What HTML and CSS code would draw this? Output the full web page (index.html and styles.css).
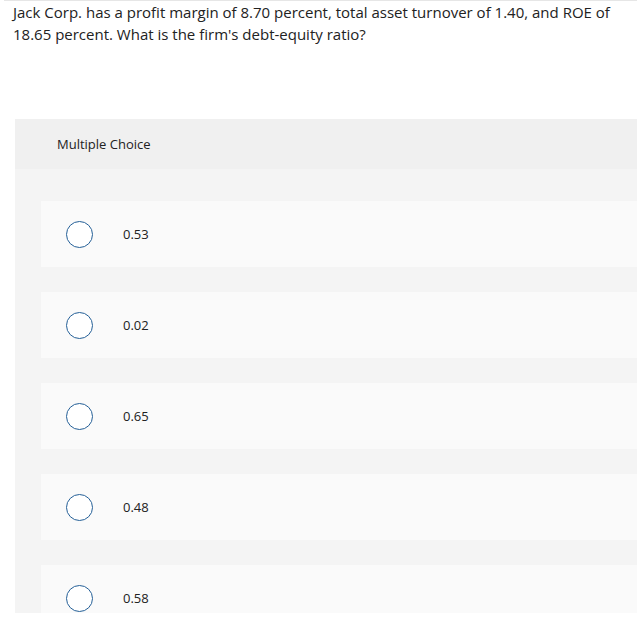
FILE: index.html
```html
<!DOCTYPE html>
<html>
<head>
<meta charset="utf-8">
<link rel="stylesheet" href="styles.css">
</head>
<body>
<div class="page">
  <div class="topline"></div>
  <p class="question">Jack Corp. has a profit margin of 8.70 percent, total asset turnover of 1.40, and ROE of 18.65 percent. What is the firm's debt-equity ratio?</p>
  <div class="panel">
    <div class="panel-head">Multiple Choice</div>
    <div class="choices">
      <div class="choice"><span class="radio"></span><span class="label">0.53</span></div>
      <div class="choice"><span class="radio"></span><span class="label">0.02</span></div>
      <div class="choice"><span class="radio"></span><span class="label">0.65</span></div>
      <div class="choice"><span class="radio"></span><span class="label">0.48</span></div>
      <div class="choice"><span class="radio"></span><span class="label">0.58</span></div>
    </div>
  </div>
</div>
</body>
</html>
```
FILE: styles.css
```css
html, body {
  margin: 0;
  padding: 0;
  background: #ffffff;
}
body {
  font-family: "Open Sans", Lato, "Liberation Sans", sans-serif;
  color: #222222;
  width: 637px;
  height: 625px;
  overflow: hidden;
}
.page {
  display: flex;
  flex-direction: column;
}
.topline {
  height: 1px;
  margin-left: 4px;
  background: #e6e6e6;
}
.question {
  margin: 0 0 0 13px;
  font-size: 15px;
  line-height: 22px;
  width: 614px;
}
.panel {
  margin: 74px 0 0 15px;
  height: 494px;
  overflow: hidden;
  background: #f4f4f4;
}
.panel-head {
  height: 50px;
  display: flex;
  align-items: center;
  padding-left: 42px;
  background: #f0f0f0;
  font-size: 13px;
  color: #222;
}
.choices {
  display: flex;
  flex-direction: column;
  gap: 25px;
  padding: 32px 0 0 26px;
}
.choice {
  height: 66px;
  flex: none;
  background: #fafafa;
  display: flex;
  align-items: center;
}
.radio {
  width: 25px;
  height: 25px;
  border: 1.5px solid #245f97;
  border-radius: 50%;
  background: #ffffff;
  margin-left: 25px;
  flex: none;
}
.label {
  margin-left: 30px;
  font-size: 13px;
}
```
